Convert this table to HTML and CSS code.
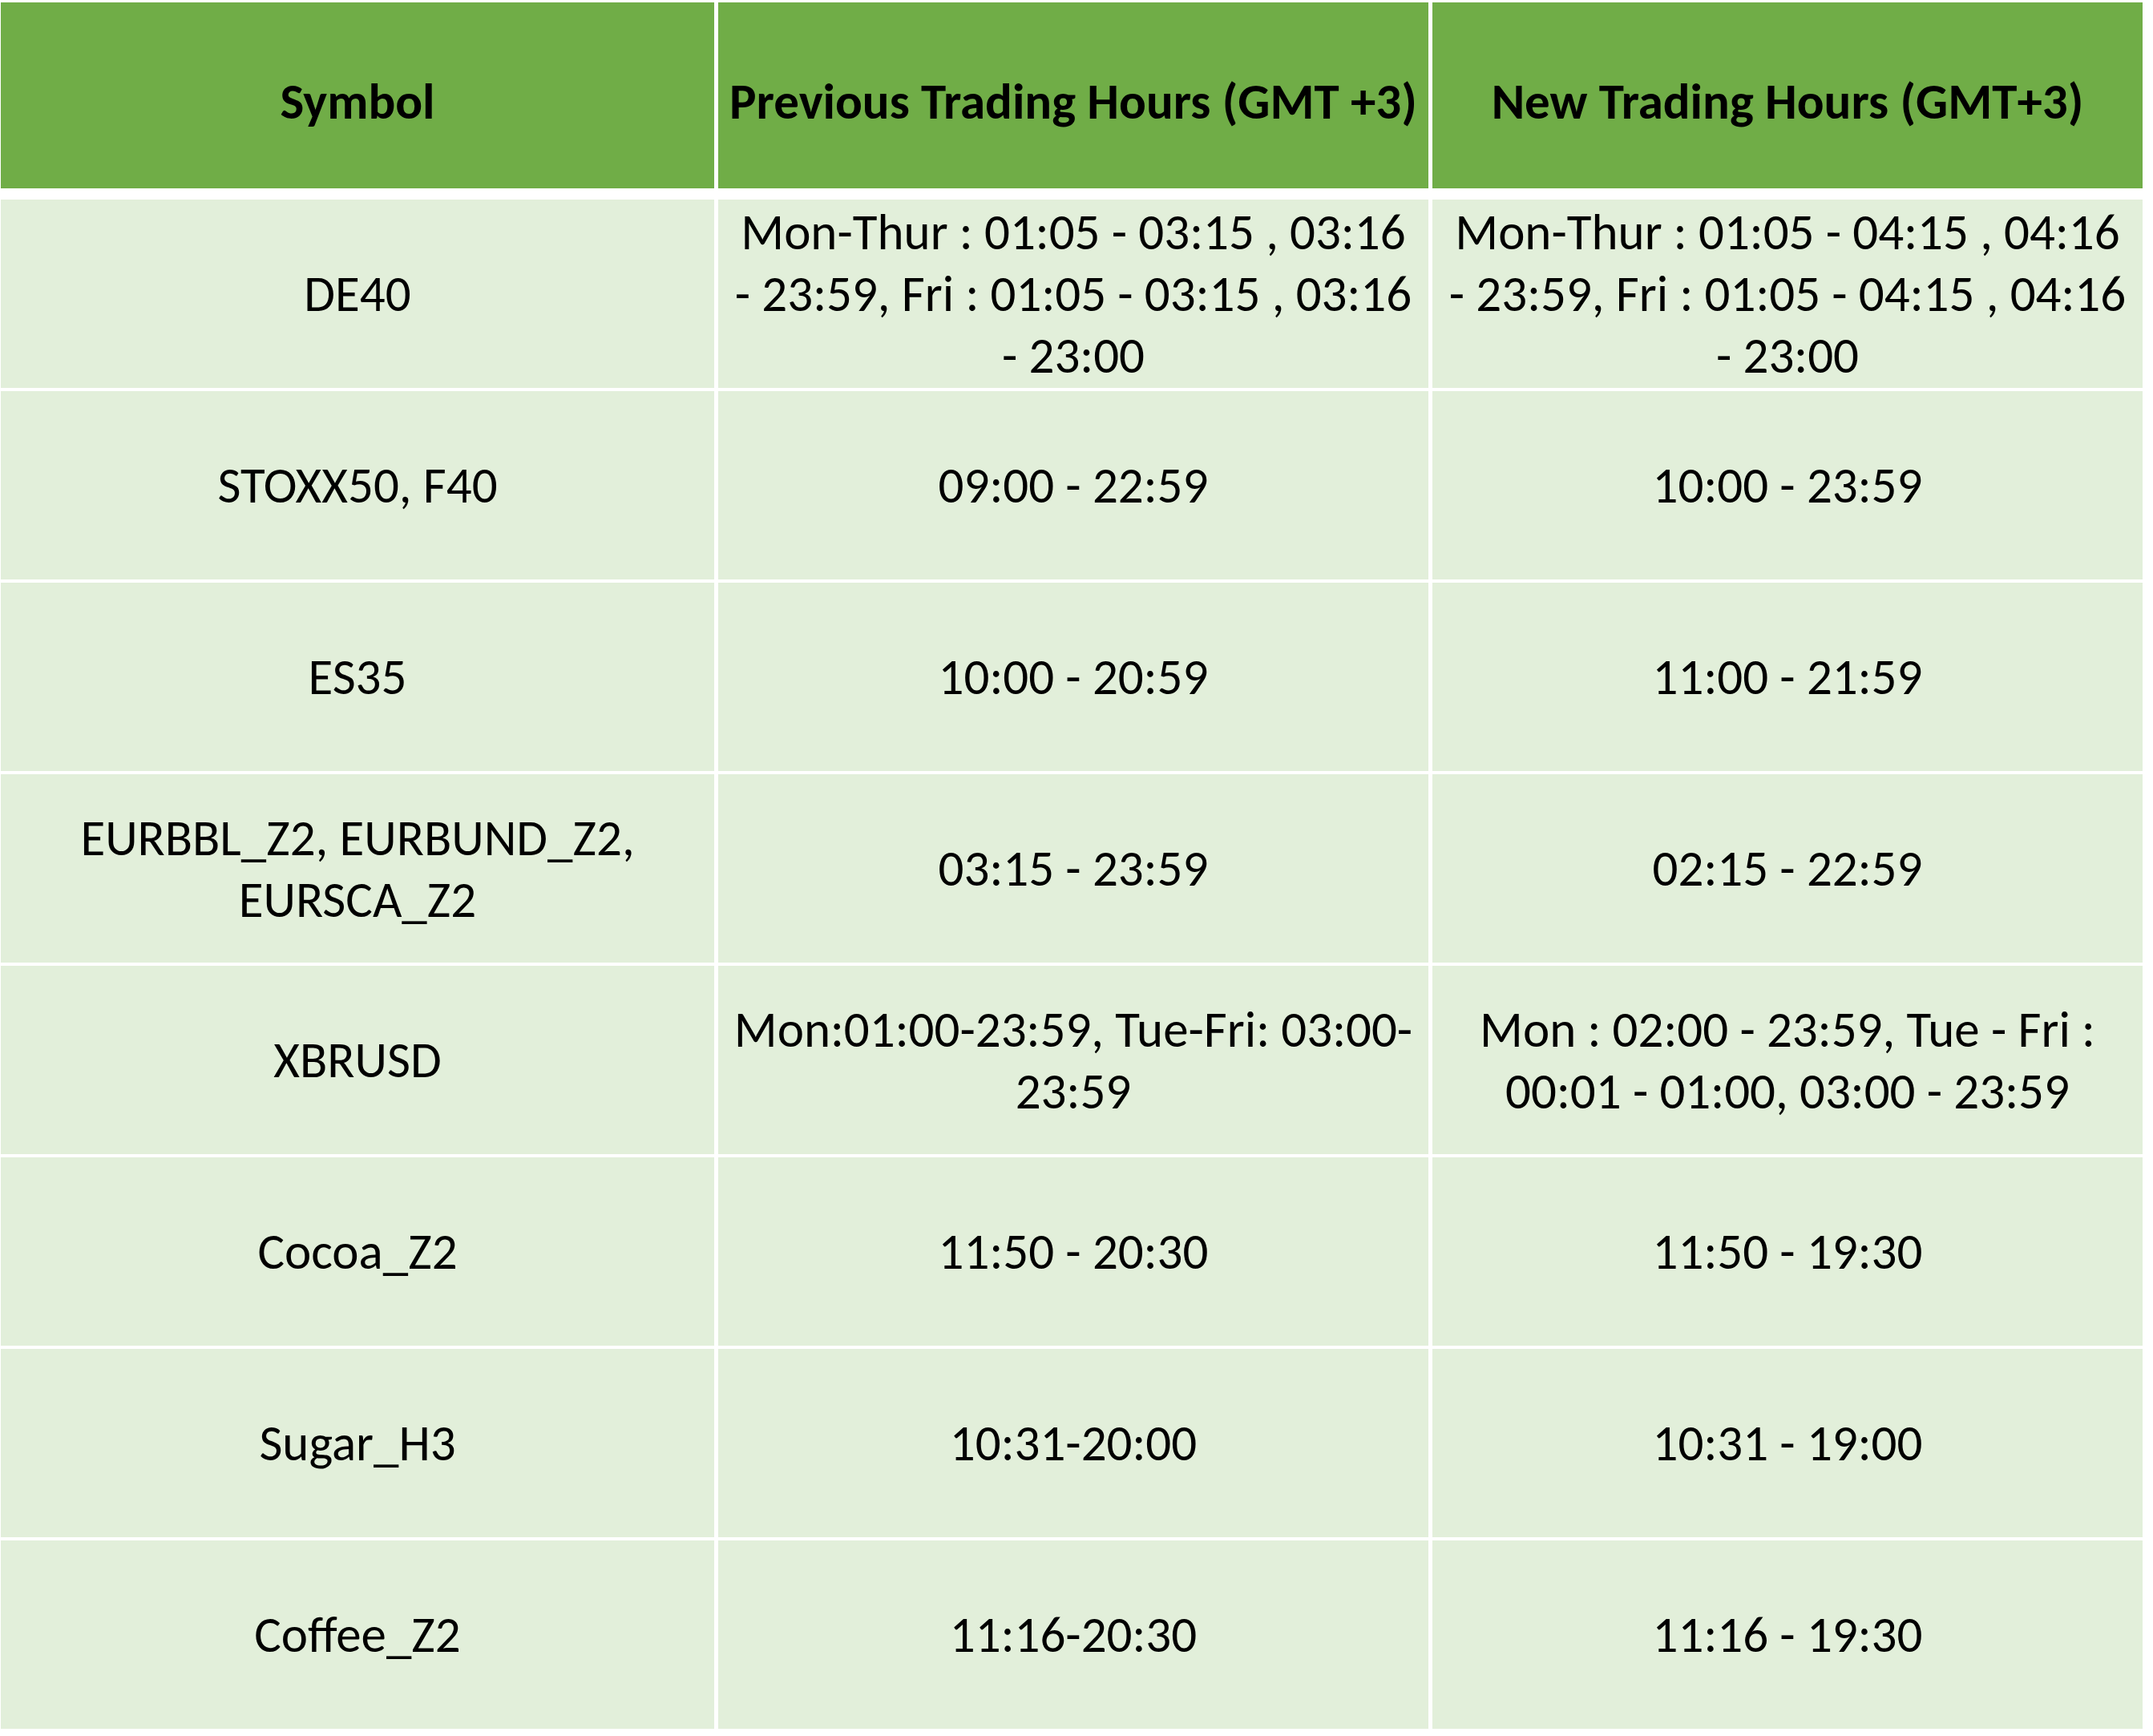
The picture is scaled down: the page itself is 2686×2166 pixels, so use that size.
FILE: index.html
```html
<!DOCTYPE html>
<html lang="en">
<head>
<meta charset="utf-8">
<title>Trading Hours</title>
<link rel="stylesheet" href="styles.css">
</head>
<body>
<div class="page">
  <div class="grid">
    <div class="cell head">Symbol</div>
    <div class="cell head">Previous Trading Hours (GMT +3)</div>
    <div class="cell head">New Trading Hours (GMT+3)</div>

    <div class="cell">DE40</div>
    <div class="cell">Mon-Thur : 01:05 - 03:15 , 03:16<br>- 23:59, Fri : 01:05 - 03:15 , 03:16<br>- 23:00</div>
    <div class="cell">Mon-Thur : 01:05 - 04:15 , 04:16<br>- 23:59, Fri : 01:05 - 04:15 , 04:16<br>- 23:00</div>

    <div class="cell">STOXX50, F40</div>
    <div class="cell">09:00 - 22:59</div>
    <div class="cell">10:00 - 23:59</div>

    <div class="cell">ES35</div>
    <div class="cell">10:00 - 20:59</div>
    <div class="cell">11:00 - 21:59</div>

    <div class="cell">EURBBL_Z2, EURBUND_Z2,<br>EURSCA_Z2</div>
    <div class="cell">03:15 - 23:59</div>
    <div class="cell">02:15 - 22:59</div>

    <div class="cell">XBRUSD</div>
    <div class="cell">Mon:01:00-23:59, Tue-Fri: 03:00-<br>23:59</div>
    <div class="cell">Mon : 02:00 - 23:59, Tue - Fri :<br>00:01 - 01:00, 03:00 - 23:59</div>

    <div class="cell">Cocoa_Z2</div>
    <div class="cell">11:50 - 20:30</div>
    <div class="cell">11:50 - 19:30</div>

    <div class="cell">Sugar_H3</div>
    <div class="cell">10:31-20:00</div>
    <div class="cell">10:31 - 19:00</div>

    <div class="cell">Coffee_Z2</div>
    <div class="cell">11:16-20:30</div>
    <div class="cell">11:16 - 19:30</div>
  </div>
</div>
</body>
</html>
```
FILE: styles.css
```css
html, body {
  margin: 0;
  padding: 0;
  background: #ffffff;
}

.page {
  padding: 3px 0 0 1px;
}

.grid {
  display: grid;
  grid-template-columns: 890px 886px 886px;
  grid-template-rows: 242px;
  grid-auto-rows: 235px;
  column-gap: 5px;
  row-gap: 4px;
  font-family: Carlito, Calibri, "Liberation Sans Narrow", "Liberation Sans", sans-serif;
  font-size: 63px;
  line-height: 77px;
  color: #000000;
}

.cell {
  display: flex;
  align-items: center;
  justify-content: center;
  text-align: center;
  background: #e2efda;
  white-space: nowrap;
}

.head {
  background: #70ad47;
  font-weight: bold;
  padding-top: 14px;
  box-sizing: border-box;
  margin-bottom: 10px;
}
```
